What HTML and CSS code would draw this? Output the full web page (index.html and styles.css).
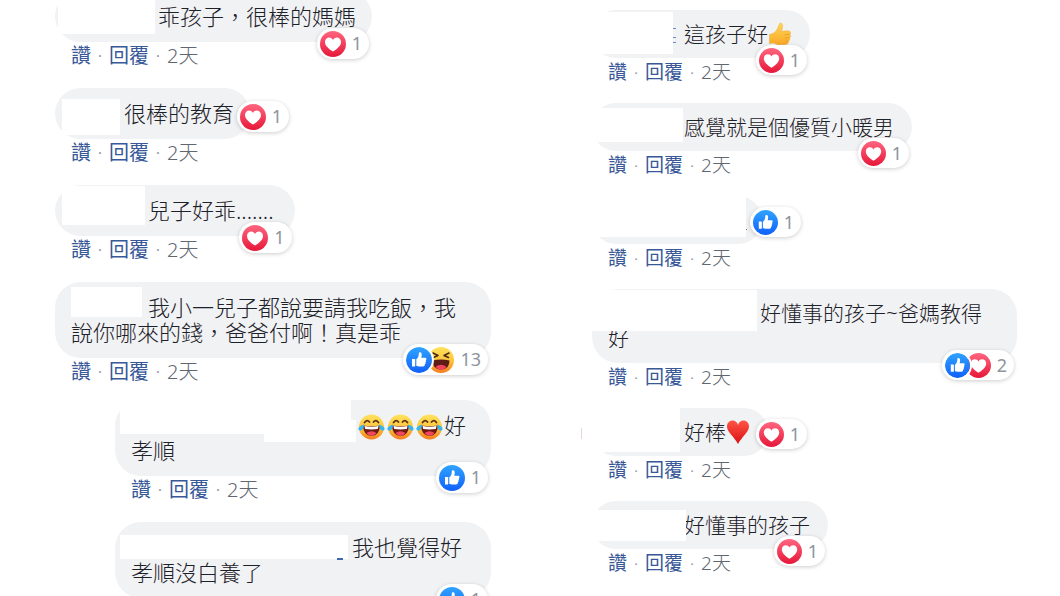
FILE: index.html
```
<!DOCTYPE html>
<html lang="zh-Hant">
<head>
<meta charset="utf-8">
<meta name="viewport" content="width=device-width, initial-scale=1">
<title>留言</title>
<link rel="stylesheet" href="styles.css">
</head>
<body>
<svg class="defs" aria-hidden="true">
  <defs>
    <linearGradient id="red" x1="0" y1="0" x2="0" y2="1"><stop offset="0" stop-color="#ff6680"/><stop offset="1" stop-color="#e61739"/></linearGradient>
    <linearGradient id="blue" x1="0" y1="0" x2="0" y2="1"><stop offset="0" stop-color="#2fa4ff"/><stop offset="1" stop-color="#1060fb"/></linearGradient>
    <linearGradient id="yellow" x1="0" y1="0" x2="0" y2="1"><stop offset="0" stop-color="#ffe25c"/><stop offset=".55" stop-color="#fdc43c"/><stop offset="1" stop-color="#f47a1d"/></linearGradient>
    <linearGradient id="heartfill" x1="0" y1="0" x2="0" y2="1"><stop offset="0" stop-color="#ff5545"/><stop offset="1" stop-color="#d91013"/></linearGradient>
    <linearGradient id="hand" x1="0" y1="0" x2="0" y2="1"><stop offset="0" stop-color="#ffd65a"/><stop offset="1" stop-color="#f9a825"/></linearGradient>
    <symbol id="love" viewBox="0 0 26 26"><circle cx="13" cy="13" r="13" fill="url(#red)"/><path fill="#fff" d="M13 20.6C8.600 17.600 5 14.600 5 10.900C5 8.100 7 6.500 9.200 6.500C10.900 6.500 12.300 7.400 13 8.900C13.700 7.400 15.100 6.500 16.800 6.500C19 6.500 21 8.100 21 10.900C21 14.600 17.400 17.600 13 20.600Z"/></symbol>
    <symbol id="like" viewBox="0 0 26 26"><circle cx="13" cy="13" r="13" fill="url(#blue)"/><path fill="#fff" d="M6 12H8.600Q9.200 12 9.200 12.600V18.900Q9.200 19.500 8.600 19.500H6Z"/><path fill="#fff" d="M10.300 12.300C12 11 12.800 9.400 12.800 6.500C12.800 5.600 13.400 5.200 14.200 5.300C16 5.600 16 8 15.300 10.700H19Q20.600 10.700 20.500 12Q20.400 12.800 19.800 13.100Q20.600 14.500 19.500 15.300Q20 16.700 18.900 17.300Q19 19.500 17.100 19.500H13.300Q11.500 19.500 10.300 18.700Z"/></symbol>
    <symbol id="haha" viewBox="0 0 26 26"><circle cx="13" cy="13" r="13" fill="url(#yellow)"/><path d="M4.500 13.500Q13 11.500 21.500 13.500Q21.500 22.500 13 22.500Q4.500 22.500 4.500 13.500Z" fill="#5d1c15"/><path d="M7.500 20Q13 15.500 18.500 20Q16 23 13 23Q10 23 7.500 20Z" fill="#f2445c"/><path d="M5 6L10 8.500L5.500 10.500M21 6L16 8.500L20.500 10.500" fill="none" stroke="#4b2b14" stroke-width="1.600" stroke-linecap="round" stroke-linejoin="round"/></symbol>
    <symbol id="joy" viewBox="0 0 28 26"><circle cx="14" cy="13" r="12.500" fill="url(#yellow)"/><path d="M7 8.500Q9.500 5 12 8M16 8Q18.500 5 21 8.500" fill="none" stroke="#5b3516" stroke-width="1.800" stroke-linecap="round"/><path d="M5.500 11.500Q14 13 22.500 11.500Q22 21.800 14 21.800Q6 21.800 5.500 11.500Z" fill="#701812"/><path d="M7 12Q14 13.400 21 12L20.300 15Q14 15.800 7.700 15Z" fill="#fff"/><path d="M9 19Q14 15.500 19 19Q17 21.800 14 21.800Q11 21.800 9 19Z" fill="#f04660"/><path d="M6.500 10.500C6 16 3.500 17.500 1.600 16.200C-.5 14.500 2 11.800 6.500 10.500ZM21.500 10.500C22 16 24.500 17.500 26.400 16.200C28.500 14.500 26 11.800 21.500 10.500Z" fill="#36b5ee"/></symbol>
    <symbol id="thumb" viewBox="0 0 24 24"><path fill="url(#hand)" stroke="#f0a92c" stroke-width=".5" d="M1.500 12.500C5 12 7 10.500 9 7.500C10.500 5 10.800 3.500 11.400 1.800C12 .5 13.800 1 14.300 2.600C15 5 14 7.500 13.500 9.500C16 9 19 8.600 21 9C23 9.500 22.900 12 21.700 12.500C23.200 13.500 22.700 15.600 21.300 16C22.300 17.200 21.600 19 20.200 19.300C20.800 20.500 20.200 22 18.500 22.300C14.500 23 10 23.300 7.500 21.700C5.500 20.600 4 21 1.500 21.500Z"/><path d="M16.500 12.800Q19 12.200 21.700 12.500M17 16.200Q19 15.600 21.300 16M17 19.500Q18.500 19 20.200 19.300" stroke="#e39a22" fill="none" stroke-width=".7"/></symbol>
    <symbol id="redheart" viewBox="0 0 24 26"><path fill="url(#heartfill)" d="M12 25C8 17.500 1 13 1 7.500C1 4 3.500 1.500 6.500 1.500C9.200 1.500 11.200 3.200 12 6C12.800 3.200 14.800 1.500 17.500 1.500C20.500 1.500 23 4 23 7.500C23 13 16 17.500 12 25Z"/></symbol>
  </defs>
</svg>
<main class="board">
  <section class="thread thread-left">
    <article class="comment c1">
      <div class="bubble"><i class="mask"></i><span class="name"></span>乖孩子，很棒的媽媽<span class="badge"><svg><use href="#love"/></svg>1</span></div>
      <div class="actions"><button>讚</button><span class="dot">·</span><button>回覆</button><span class="dot">·</span><time>2天</time></div>
    </article>
    <article class="comment c2">
      <div class="bubble"><i class="mask"></i><span class="name"></span>很棒的教育<span class="badge beside"><svg><use href="#love"/></svg>1</span></div>
      <div class="actions"><button>讚</button><span class="dot">·</span><button>回覆</button><span class="dot">·</span><time>2天</time></div>
    </article>
    <article class="comment c3">
      <div class="bubble"><i class="mask"></i><span class="name"></span>兒子好乖.......<span class="badge"><svg><use href="#love"/></svg>1</span></div>
      <div class="actions"><button>讚</button><span class="dot">·</span><button>回覆</button><span class="dot">·</span><time>2天</time></div>
    </article>
    <article class="comment c4">
      <div class="bubble"><i class="mask"></i><span class="name"></span>我小一兒子都說要請我吃飯，我說你哪來的錢，爸爸付啊！真是乖<span class="badge"><svg><use href="#like"/></svg><svg class="second"><use href="#haha"/></svg>13</span></div>
      <div class="actions"><button>讚</button><span class="dot">·</span><button>回覆</button><span class="dot">·</span><time>2天</time></div>
    </article>
    <article class="comment reply c5">
      <div class="bubble"><i class="mask"></i><i class="mask lower"></i><span class="name"></span><svg class="joy"><use href="#joy"/></svg><svg class="joy"><use href="#joy"/></svg><svg class="joy"><use href="#joy"/></svg>好孝順<span class="badge"><svg><use href="#like"/></svg>1</span></div>
      <div class="actions"><button>讚</button><span class="dot">·</span><button>回覆</button><span class="dot">·</span><time>2天</time></div>
    </article>
    <article class="comment reply c6">
      <div class="bubble"><i class="mask"></i><i class="trace"></i><span class="name"></span>我也覺得好孝順沒白養了<span class="badge"><svg><use href="#like"/></svg>1</span></div>
    </article>
  </section>
  <section class="thread thread-right">
    <article class="comment d1">
      <div class="bubble"><i class="mask"></i><i class="trace"></i><span class="name"></span>這孩子好<svg class="emoji"><use href="#thumb"/></svg><span class="badge"><svg><use href="#love"/></svg>1</span></div>
      <div class="actions"><button>讚</button><span class="dot">·</span><button>回覆</button><span class="dot">·</span><time>2天</time></div>
    </article>
    <article class="comment d2">
      <div class="bubble"><i class="mask"></i><span class="name"></span>感覺就是個優質小暖男<span class="badge"><svg><use href="#love"/></svg>1</span></div>
      <div class="actions"><button>讚</button><span class="dot">·</span><button>回覆</button><span class="dot">·</span><time>2天</time></div>
    </article>
    <article class="comment d3">
      <div class="bubble"><i class="mask"></i><i class="trace"></i><span class="name"></span><span class="badge beside"><svg><use href="#like"/></svg>1</span></div>
      <div class="actions"><button>讚</button><span class="dot">·</span><button>回覆</button><span class="dot">·</span><time>2天</time></div>
    </article>
    <article class="comment d4">
      <div class="bubble"><span class="name"></span>好懂事的孩子~爸媽教得<br>好<i class="mask"></i><span class="badge"><svg><use href="#like"/></svg><svg class="second"><use href="#love"/></svg>2</span></div>
      <div class="actions"><button>讚</button><span class="dot">·</span><button>回覆</button><span class="dot">·</span><time>2天</time></div>
    </article>
    <article class="comment d5">
      <div class="bubble"><i class="mask"></i><i class="trace"></i><span class="name"></span>好棒<svg class="emoji"><use href="#redheart"/></svg><span class="badge beside"><svg><use href="#love"/></svg>1</span></div>
      <div class="actions"><button>讚</button><span class="dot">·</span><button>回覆</button><span class="dot">·</span><time>2天</time></div>
    </article>
    <article class="comment d6">
      <div class="bubble"><span class="name"></span>好懂事的孩子<i class="mask"></i><span class="badge"><svg><use href="#love"/></svg>1</span></div>
      <div class="actions"><button>讚</button><span class="dot">·</span><button>回覆</button><span class="dot">·</span><time>2天</time></div>
    </article>
  </section>
</main>
</body>
</html>
```
FILE: styles.css
```
* { box-sizing: border-box; }

body {
  margin: 0;
  height: 100vh;
  overflow: hidden;
  background: #fff;
  color: #1d2129;
  font-family: "Noto Sans", "Noto Sans CJK TC", sans-serif;
  font-weight: 300;
}

.defs { position: absolute; width: 0; height: 0; }

.board {
  display: grid;
  grid-template-columns: 436fr 425fr;
  gap: 101px;
  padding: 0 43px 0 55px;
}

.thread { display: flex; flex-direction: column; }
.thread-left { margin-top: -9px; gap: 18px; font-size: 22px; }
.thread-right { margin-top: 10px; gap: 17px; font-size: 21px; }

.comment { display: flex; flex-direction: column; align-items: flex-start; }
.reply { margin-left: 60px; }
.c5 { margin-top: -4px; }

.bubble {
  position: relative;
  padding: 13px 16px;
  border-radius: 26px;
  background: #f1f2f4;
  line-height: 25px;
}
.c3 .bubble { padding-right: 21px; }
.thread-right .bubble { padding: 12px 18px 12px 16px; line-height: 24px; }
.thread-right .d4 .bubble { line-height: 25px; }
.d4 .bubble { align-self: stretch; }
.reply .bubble { align-self: stretch; }

.name { display: inline-block; height: 1px; }
.mask { position: absolute; background: #fff; }
.trace { position: absolute; background: #4267b2; }

.joy { width: 29px; height: 26px; margin: -10px 0 -4px; vertical-align: -2px; }
.emoji { width: 24px; height: 26px; margin: -10px 0 -4px; vertical-align: -1px; }

.badge {
  position: absolute;
  right: 3px;
  bottom: -17px;
  display: flex;
  align-items: center;
  height: 31px;
  padding: 0 7px 0 3px;
  border-radius: 16px;
  background: #fff;
  box-shadow: 0 1px 4px rgba(0, 0, 0, .2);
  color: #8d949e;
  font-size: 18px;
  font-weight: 400;
  line-height: 31px;
  white-space: nowrap;
}
.badge svg { width: 26px; height: 26px; margin-right: 6px; }
.badge svg:has(+ .second) { position: relative; z-index: 1; margin-right: -4px; border-radius: 50%; box-shadow: 0 0 0 2px #fff; }
.beside { right: -39px; bottom: 7px; }
.thread-right .badge { height: 30px; }
.thread-right .badge svg { width: 25px; height: 25px; }

.actions {
  display: flex;
  align-items: center;
  height: 28px;
  padding-left: 16px;
  color: #616770;
  font-size: 20px;
  line-height: 28px;
}
.thread-right .actions { font-size: 19px; }
.actions button {
  padding: 0;
  border: 0;
  background: none;
  color: #385898;
  font: inherit;
  font-weight: 400;
  cursor: pointer;
}
.dot { width: 18px; color: #90949c; text-align: center; }

/* Hidden names */
.c1 .name { width: 87px; }
.c1 .mask { left: 3px; top: 0; width: 97px; height: 43px; }
.c2 .name { width: 53px; }
.c2 .mask { left: 7px; top: 11px; width: 58px; height: 36px; }
.c3 .name { width: 77px; }
.c3 .mask { left: 7px; top: 1px; width: 83px; height: 39px; }
.c4 .name { width: 77px; }
.c4 .mask { left: 16px; top: 5px; width: 71px; height: 30px; }
.c5 .name { width: 226px; }
.c5 .mask { left: 5px; top: 0; width: 231px; height: 34px; }
.c5 .lower { left: 149px; top: 20px; width: 92px; height: 22px; }
.c6 .name { width: 221px; }
.c6 .mask { left: 5px; top: 13px; width: 228px; height: 24px; }
.c6 .trace { left: 222px; top: 36px; width: 6px; height: 2px; }

.thread-right .name { width: 76px; }
.d1 .mask { left: -3px; top: 2px; width: 84px; height: 42px; }
.d1 .trace { left: 81px; top: 18px; width: 3px; height: 15px; background: repeating-linear-gradient(#6f8cc4 0 1px, transparent 1px 9px, #6f8cc4 9px 10px, transparent 10px 14px); }
.d2 .mask { left: -3px; top: 5px; width: 94px; height: 34px; }
.thread-right .d3 .name { width: 136px; }
.d3 .mask { left: -3px; top: 0; width: 157px; height: 41px; }
.d3 .trace { left: 154px; top: 33px; width: 1px; height: 1px; background: #777; }
.thread-right .d4 .name { width: 152px; }
.d4 .mask { left: -3px; top: 1px; width: 168px; height: 41px; }
.d5 .mask { left: -3px; top: 0; width: 91px; height: 44px; }
.d5 .trace { left: -11px; top: 20px; width: 1px; height: 11px; background: #e5d5d8; }
.d6 .mask { left: -3px; top: 9px; width: 97px; height: 31px; }
```
